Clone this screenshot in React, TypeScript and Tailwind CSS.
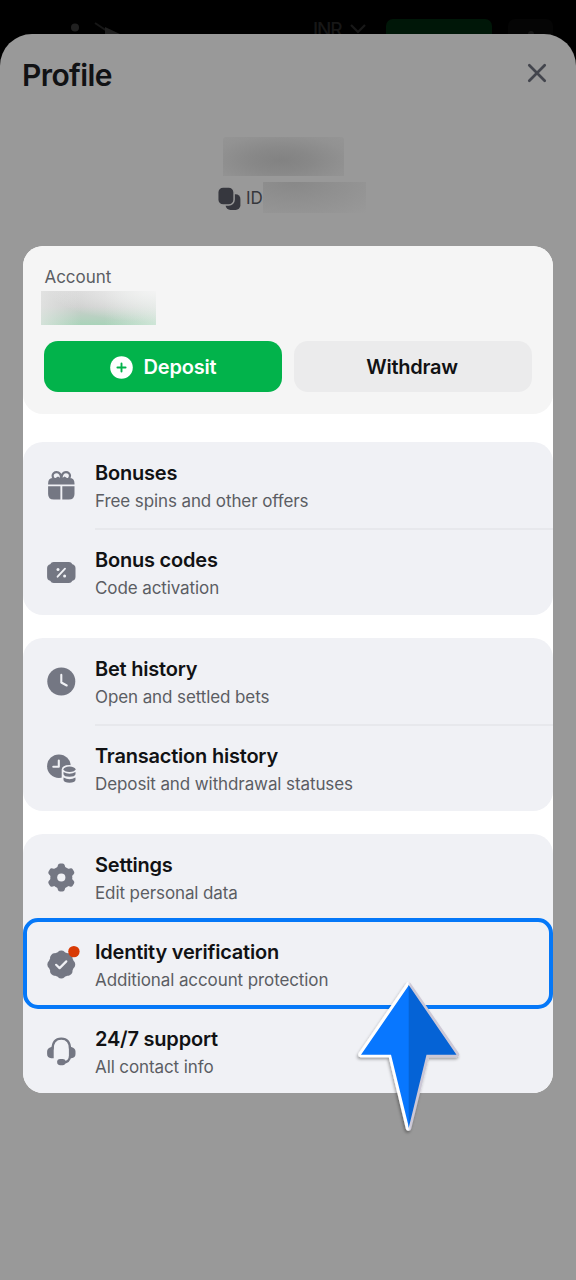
import { JSX, ReactNode } from "react";

type Item = {
    title: string;
    text: string;
    icon: ReactNode;
    active?: boolean;
};

const groups: Item[][] = [
    [
        { title: "Bonuses", text: "Free spins and other offers", icon: <GiftIcon /> },
        { title: "Bonus codes", text: "Code activation", icon: <CouponIcon /> },
    ],
    [
        { title: "Bet history", text: "Open and settled bets", icon: <ClockIcon /> },
        { title: "Transaction history", text: "Deposit and withdrawal statuses", icon: <TransactionIcon /> },
    ],
    [
        { title: "Settings", text: "Edit personal data", icon: <GearIcon /> },
        { title: "Identity verification", text: "Additional account protection", icon: <BadgeIcon />, active: true },
        { title: "24/7 support", text: "All contact info", icon: <HeadsetIcon /> },
    ],
];

export default function App(): JSX.Element {
    return (
        <div className="relative w-[576px] h-[1280px] overflow-hidden bg-black font-['Inter',sans-serif] flex flex-col">
            <TopBar />

            <main className="relative flex-1 rounded-t-[32px] bg-[#999999] px-[23px]">
                {/* Header */}
                <header className="flex h-[82px] items-center justify-between pr-[6px]">
                    <h1 className="-ml-[1px] text-[30px] leading-[36px] font-semibold tracking-[-0.6px] text-[#111214]">Profile</h1>
                    <svg width="20" height="20" viewBox="0 0 20 20" className="-mt-[4px]" fill="none" stroke="#43454d" strokeWidth="2.7" strokeLinecap="round">
                        <path d="M2.3 2.3l15.4 15.4M17.7 2.3l-15.4 15.4" />
                    </svg>
                </header>

                {/* User name and id */}
                <section className="flex h-[130px] flex-col pt-[21px]">
                    <div className="ml-[200px] h-[39px] w-[121px] rounded-t-[3px] bg-[radial-gradient(ellipse_at_48%_60%,#828282_0%,#888888_35%,#929292_75%,#959595_100%)]" />
                    <div className="mt-[6px] ml-[195px] flex items-center">
                        <CopyIcon />
                        <span className="ml-[5.5px] w-[16.5px] pt-[1px] text-[17px] leading-[24px] text-[#36373c]">ID</span>
                        <div className="h-[31px] w-[103px] bg-[radial-gradient(ellipse_at_30%_0%,#888888_0%,#909090_45%,#999999_100%)]" />
                    </div>
                </section>

                <div className="relative rounded-[20px] bg-white overflow-hidden">
                    {/* Account */}
                    <section className="h-[168px] rounded-[20px] bg-[#f5f5f5] px-[21px] pt-[19px]">
                        <div className="pl-[0.5px] text-[17px] leading-[24px] tracking-[-0.05px] text-[#5b5d63]">Account</div>
                        <div className="mt-[2px] -ml-[3px] h-[34px] w-[115px] bg-[radial-gradient(ellipse_at_100%_0%,#f3f3f3_0%,#f3f3f300_65%),linear-gradient(90deg,#e8e9e8aa_0%,#e8e9e800_35%,#eef3f000_55%,#e6f2ea99_100%),linear-gradient(180deg,#d4d4d4_0%,#cdcecd_45%,#a9d3b9_100%)]" />
                        <div className="mt-[16px] flex gap-[12px]">
                            <button className="flex h-[51px] w-[238px] items-center justify-center gap-[11px] rounded-[14px] bg-[#02b34b] pt-[1px] text-[20px] font-semibold tracking-[-0.2px] text-white">
                                <svg width="23" height="23" viewBox="0 0 23 23">
                                    <circle cx="11.5" cy="11.5" r="11.3" fill="#fff" />
                                    <path d="M11.5 7.4v8.2M7.4 11.5h8.2" stroke="#02b34b" strokeWidth="1.9" strokeLinecap="round" />
                                </svg>
                                Deposit
                            </button>
                            <button className="h-[51px] w-[238px] rounded-[14px] bg-[#ebebec] pt-[1px] pr-[2px] text-[20px] font-semibold tracking-[-0.25px] text-[#111214]">
                                Withdraw
                            </button>
                        </div>
                    </section>

                    {/* Menu */}
                    <nav className="mt-[28px] flex flex-col gap-[23px]">
                        {groups.map((items, i) => (
                            <MenuGroup key={i} items={items} />
                        ))}
                    </nav>
                </div>
            </main>

            <Pointer />
        </div>
    );
}

function MenuGroup({ items }: { items: Item[] }): JSX.Element {
    const divided = items.length === 2;

    return (
        <div className="rounded-[20px] bg-[#f0f1f5]">
            {items.map((item, i) => (
                <div key={item.title} className="relative flex h-[87px] pl-[22px] last:h-[86px] nth-3:h-[85px]">
                    <div className="mt-[27px] h-[32px] w-[32px] text-[#747783]">{item.icon}</div>
                    <div className="ml-[18px] flex-1 pt-[18px]">
                        <div className="text-[20px] leading-[26px] font-semibold tracking-[-0.21px] text-[#111214]">{item.title}</div>
                        <div className="text-[17px] leading-[30px] tracking-[-0.1px] text-[#5b5d63]">{item.text}</div>
                    </div>
                    {divided && i === 0 && <div className="absolute right-0 bottom-[-1px] left-[72px] h-[2px] bg-[#e7e8ec]" />}
                    {item.active && (
                        <div className="absolute -top-[3px] right-0 left-0 h-[91px] rounded-[15px] border-4 border-[#0578f8]" />
                    )}
                </div>
            ))}
        </div>
    );
}

function TopBar(): JSX.Element {
    return (
        <div className="flex h-[34px]">
            <svg width="60" height="34" viewBox="0 0 60 34" className="ml-[66px]">
                <circle cx="9" cy="27.5" r="4" fill="#202020" />
                <path d="M29 23l12 8" stroke="#161616" strokeWidth="2" />
                <path d="M39 27l15 7H39z" fill="#202020" />
            </svg>
            <div className="mt-[18px] ml-[187px] w-[30px] text-[19px] leading-[24px] font-medium tracking-[-1.1px] text-[#171717]">INR</div>
            <svg width="16" height="12" viewBox="0 0 16 12" className="mt-[23px] ml-[7px]" fill="none" stroke="#181818" strokeWidth="2.2">
                <path d="M1 2l7 7 7-7" />
            </svg>
            <div className="mt-[19px] ml-[20px] h-[30px] w-[106px] rounded-[7px] bg-[#001708]" />
            <div className="mt-[19px] ml-[16px] flex h-[30px] w-[45px] justify-center rounded-[7px] bg-[#050505]">
                <div className="mt-[12px] h-[8px] w-[6px] rounded-full bg-[#161616]" />
            </div>
        </div>
    );
}

function CopyIcon(): JSX.Element {
    return (
        <svg width="23" height="24" viewBox="0 0 23 24" fill="#36373e" className="mt-[2px] -ml-[0.5px]">
            <rect x="7.6" y="7.2" width="14.8" height="15.8" rx="4.8" />
            <rect x="-0.3" y="-0.1" width="16.4" height="18.2" rx="5.4" stroke="#999999" strokeWidth="1.5" />
        </svg>
    );
}

function Icon({ children }: { children: ReactNode }): JSX.Element {
    return (
        <svg width="32" height="32" viewBox="-0.3 -0.5 32 32" fill="currentColor" className="overflow-visible">
            {children}
        </svg>
    );
}

function GiftIcon(): JSX.Element {
    return (
        <Icon>
            <path
                d="M15.7 8.6C15.9 5 14 2.6 11.3 2.6C8.9 2.6 7.3 4.3 7.3 6.3C7.3 7.4 7.8 8.3 8.6 8.9M16.3 8.6C16.1 5 18 2.6 20.7 2.6C23.1 2.6 24.7 4.3 24.7 6.3C24.7 7.4 24.2 8.3 23.4 8.9"
                fill="none"
                stroke="currentColor"
                strokeWidth="2.2"
            />
            <path d="M2.8 14.9V14Q2.8 8.6 8 8.6H10.3L12.7 7L14.6 8.2H17.4L19.3 7L21.7 8.6H24Q29.2 8.6 29.2 14V14.9z" />
            <path d="M2.8 16.7H15.1V30.1H8.5Q2.8 30.1 2.8 24.5zM17 16.7H29.2V24.5Q29.2 30.1 23.5 30.1H17z" />
        </Icon>
    );
}

function CouponIcon(): JSX.Element {
    return (
        <Icon>
            <path d="M8.3 5.5H23.7Q26 5.5 27.1 7.7Q30.2 8.5 30.2 11.8V20.2Q30.2 23.5 27.1 24.3Q26 26.5 23.7 26.5H8.3Q6 26.5 4.9 24.3Q1.8 23.5 1.8 20.2V11.8Q1.8 8.5 4.9 7.7Q6 5.5 8.3 5.5z" />
            <path d="M12.3 20.2L19.7 12.2" stroke="#f0f1f5" strokeWidth="1.9" strokeLinecap="round" />
            <circle cx="12.7" cy="12.9" r="1.5" fill="#f0f1f5" />
            <circle cx="19.3" cy="19.5" r="1.5" fill="#f0f1f5" />
        </Icon>
    );
}

function ClockIcon(): JSX.Element {
    return (
        <Icon>
            <circle cx="16" cy="16" r="14" />
            <path d="M16 9.4V17L21.4 20" fill="none" stroke="#f0f1f5" strokeWidth="2.1" strokeLinecap="round" strokeLinejoin="round" />
        </Icon>
    );
}

function TransactionIcon(): JSX.Element {
    return (
        <Icon>
            <circle cx="13.6" cy="13.7" r="11.8" />
            <path d="M13.5 8V14.2H8" fill="none" stroke="#f0f1f5" strokeWidth="2.1" strokeLinecap="round" strokeLinejoin="round" />
            <path d="M16.4 31V17Q16.8 12.4 24 12.4Q31 12.4 31.5 17V31z" fill="#f0f1f5" />
            <ellipse cx="24.2" cy="16.8" rx="6" ry="2.7" />
            <path d="M18.2 19.5Q24.2 22.8 30.2 19.5V21.8Q29.6 24.3 24.2 24.3Q18.8 24.3 18.2 21.8z" />
            <path d="M18.2 25Q24.2 28.3 30.2 25V27.5Q29.6 30.2 24.2 30.2Q18.8 30.2 18.2 27.5z" />
        </Icon>
    );
}

function GearIcon(): JSX.Element {
    return (
        <Icon>
            <circle cx="16" cy="16" r="11" />
            {[0, 60, 120].map((deg) => (
                <path
                    key={deg}
                    d="M14.8 2H17.2Q19.1 2 19.5 4L20.6 8V24L19.5 28Q19.1 30 17.2 30H14.8Q12.9 30 12.5 28L11.4 24V8L12.5 4Q12.9 2 14.8 2z"
                    transform={`rotate(${deg} 16 16)`}
                />
            ))}
            <circle cx="16" cy="16" r="4.1" fill="#f0f1f5" />
        </Icon>
    );
}

function BadgeIcon(): JSX.Element {
    return (
        <Icon>
            <circle cx="16" cy="16" r="12.7" />
            {[0, 45, 90, 135, 180, 225, 270, 315].map((deg) => (
                <circle key={deg} cx="16" cy="6" r="3.9" transform={`rotate(${deg} 16 16)`} />
            ))}
            <path d="M10.8 16.3L14.3 19.6L21 12.9" fill="none" stroke="#f0f1f5" strokeWidth="2.2" strokeLinecap="round" strokeLinejoin="round" />
            <circle cx="28.6" cy="3.1" r="5.7" fill="#d83a05" />
        </Icon>
    );
}

function HeadsetIcon(): JSX.Element {
    return (
        <Icon>
            <path d="M7.2 14C7.2 7 10.5 3.2 16 3.2C21.5 3.2 24.8 7 24.8 14V20C24.8 25 21.5 27 17 27.2" fill="none" stroke="currentColor" strokeWidth="2.2" />
            <path d="M8.4 11V22.8H6Q1.8 22.3 1.8 18.6V16Q1.8 12.6 6 11.4zM23.6 11V22.8H26Q30.2 22.3 30.2 18.6V16Q30.2 12.6 26 11.4z" />
            <rect x="11.8" y="23.4" width="8.6" height="6.3" rx="3.15" />
        </Icon>
    );
}

function Pointer(): JSX.Element {
    return (
        <svg width="112" height="162" viewBox="0 0 112 162" className="absolute top-[976px] left-[352px]">
            <defs>
                <linearGradient id="edge" x1="0" x2="1" y1="0" y2="0">
                    <stop offset="0.49" stopColor="#ffffff" />
                    <stop offset="0.52" stopColor="#ccc8d6" />
                </linearGradient>
                <filter id="shade" x="-20%" y="-20%" width="140%" height="140%">
                    <feDropShadow dx="-1" dy="2" stdDeviation="1.5" floodColor="#000" floodOpacity="0.35" />
                </filter>
            </defs>
            <path
                d="M56.5 9L104.5 78.5H74.5L56.5 152L39 78.5H9z"
                fill="#fff"
                stroke="url(#edge)"
                strokeWidth="5.5"
                strokeLinejoin="round"
                filter="url(#shade)"
            />
            <path d="M57 9V152L39 78.8H9z" fill="#0877ff" />
            <path d="M56.7 9L104.5 78.8H74.5L56.7 152z" fill="#0563d6" />
        </svg>
    );
}
